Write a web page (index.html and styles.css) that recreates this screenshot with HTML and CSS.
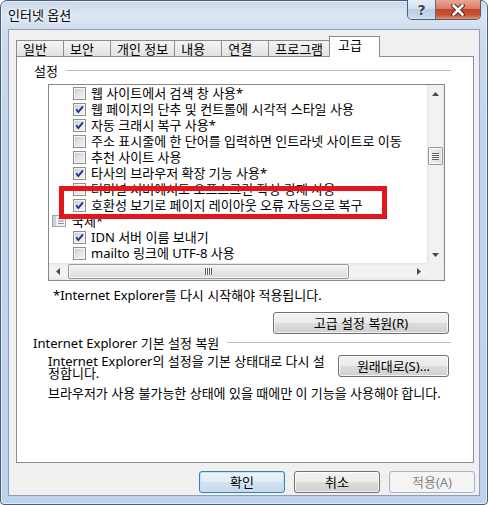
FILE: index.html
```html
<!DOCTYPE html>
<html lang="ko">
<head>
  <meta charset="UTF-8">
  <title>인터넷 옵션</title>
  <link rel="stylesheet" href="styles.css">
</head>
<body>
  <div class="window">
    <div class="titlebar">
      <span class="title">인터넷 옵션</span>
      <div class="caption">
        <span class="cap-btn help">?</span>
        <span class="cap-btn close">
          <svg width="14" height="12" viewBox="0 0 14 12">
            <path d="M2.5 1.5 L11.5 10.5 M11.5 1.5 L2.5 10.5" stroke="#4a2a22" stroke-width="4.6" stroke-linecap="round"/>
            <path d="M2.5 1.5 L11.5 10.5 M11.5 1.5 L2.5 10.5" stroke="#fff" stroke-width="2.6" stroke-linecap="round"/>
          </svg>
        </span>
      </div>
    </div>

    <div class="client">
      <div class="tabs">
        <span class="tab">일반</span>
        <span class="tab">보안</span>
        <span class="tab">개인 정보</span>
        <span class="tab">내용</span>
        <span class="tab">연결</span>
        <span class="tab">프로그램</span>
        <span class="tab active">고급</span>
      </div>

      <div class="panel">
        <div class="group-title"><span>설정</span></div>

        <div class="list">
          <div class="list-body">
            <div class="item"><span class="check"></span>웹 사이트에서 검색 창 사용*</div>
            <div class="item"><span class="check on"></span>웹 페이지의 단추 및 컨트롤에 시각적 스타일 사용</div>
            <div class="item"><span class="check on"></span>자동 크래시 복구 사용*</div>
            <div class="item"><span class="check"></span>주소 표시줄에 한 단어를 입력하면 인트라넷 사이트로 이동</div>
            <div class="item"><span class="check"></span>추천 사이트 사용</div>
            <div class="item"><span class="check on"></span>타사의 브라우저 확장 기능 사용*</div>
            <div class="item"><span class="check"></span>터미널 서버에서도 오프스크린 작성 강제 사용</div>
            <div class="item"><span class="check on"></span>호환성 보기로 페이지 레이아웃 오류 자동으로 복구</div>
            <div class="item node">
              <svg class="node-icon" width="14" height="12" viewBox="0 0 14 12">
                <rect x="0.5" y="0.5" width="13" height="11" fill="#eef1f4" stroke="#9aa6b2"/>
                <rect x="1" y="1" width="3" height="10" fill="#c9d1da"/>
                <path d="M6 3.5 H12 M6 6 H12 M6 8.5 H12" stroke="#8a96a3"/>
              </svg>
              국제*
            </div>
            <div class="item"><span class="check on"></span>IDN 서버 이름 보내기</div>
            <div class="item"><span class="check"></span>mailto 링크에 UTF-8 사용</div>
          </div>

          <div class="vscroll">
            <span class="arrow">
              <svg width="7" height="4" viewBox="0 0 7 4"><path d="M0 4 L3.5 0 L7 4Z" fill="#4a4a4a"/></svg>
            </span>
            <div class="track">
              <span class="vthumb"><span class="grip"></span></span>
            </div>
            <span class="arrow">
              <svg width="7" height="4" viewBox="0 0 7 4"><path d="M0 0 L3.5 4 L7 0Z" fill="#4a4a4a"/></svg>
            </span>
          </div>

          <div class="hscroll">
            <span class="arrow">
              <svg width="4" height="7" viewBox="0 0 4 7"><path d="M4 0 L0 3.5 L4 7Z" fill="#4a4a4a"/></svg>
            </span>
            <div class="track">
              <span class="hthumb"><span class="grip"></span></span>
            </div>
            <span class="arrow">
              <svg width="4" height="7" viewBox="0 0 4 7"><path d="M0 0 L4 3.5 L0 7Z" fill="#4a4a4a"/></svg>
            </span>
          </div>

          <div class="corner"></div>

          <div class="highlight"></div>
        </div>

        <p class="note">*Internet Explorer를 다시 시작해야 적용됩니다.</p>

        <div class="btn-row">
          <button class="btn restore">고급 설정 복원(R)</button>
        </div>

        <div class="group-title second"><span>Internet Explorer 기본 설정 복원</span></div>

        <div class="reset-row">
          <p>Internet Explorer의 설정을 기본 상태대로 다시 설정합니다.</p>
          <button class="btn reset">원래대로(S)...</button>
        </div>

        <p class="warn">브라우저가 사용 불가능한 상태에 있을 때에만 이 기능을 사용해야 합니다.</p>
      </div>

      <div class="footer">
        <button class="btn default">확인</button>
        <button class="btn">취소</button>
        <button class="btn" disabled>적용(A)</button>
      </div>
    </div>
  </div>
</body>
</html>
```

FILE: styles.css
```css
body {
  margin: 0;
  font-family: "Noto Sans", "Noto Sans CJK KR", sans-serif;
  font-size: 13px;
  color: #000;
  background: #fff;
}
.window {
  width: 488px;
  height: 505px;
  box-sizing: border-box;
  display: flex;
  flex-direction: column;
  padding: 0 7px 8px 7px;
  border: 1px solid #4d5f78;
  border-radius: 7px 7px 4px 4px;
  background: linear-gradient(180deg, #c9d8ea 0, #dbe6f3 14px, #cddcee 30px, #c2d6ed 120px, #bdd3ec 100%);
  box-shadow: inset 0 0 0 1px rgba(255, 255, 255, 0.55);
}
.titlebar {
  height: 28px;
  display: flex;
  justify-content: space-between;
  align-items: center;
}
.title {
  line-height: 16px;
  text-shadow: 0 0 6px #fff, 0 0 3px #fff;
}
.caption {
  display: flex;
  align-self: flex-start;
  margin: -1px -1px 0 0;
  border: 1px solid #4b5d77;
  border-top: none;
  border-radius: 0 0 5px 5px;
  overflow: hidden;
}
.cap-btn {
  height: 19px;
  display: flex;
  align-items: center;
  justify-content: center;
}
.help {
  width: 27px;
  border-right: 1px solid #5c6e86;
  background: linear-gradient(180deg, #e6eef7 0, #d3dfec 45%, #bccde2 50%, #c6d6ea 85%, #d8e4f2 100%);
  color: #33445c;
  font-family: "DejaVu Sans", sans-serif;
  font-size: 14px;
  font-weight: bold;
  text-shadow: 0 0 2px #fff, 0 0 1px #fff;
}
.close {
  width: 44px;
  background: linear-gradient(180deg, #e9a896 0, #dc7b64 45%, #c4442c 50%, #cc5535 80%, #e3906f 100%);
}
.client {
  flex: 1;
  display: flex;
  flex-direction: column;
  background: #f0f0f0;
  border: 1px solid #8b9fb8;
}
.tabs {
  display: flex;
  align-items: flex-end;
  height: 20px;
  margin: 6px 0 0 7px;
}
.tab {
  height: 16px;
  min-width: 48px;
  box-sizing: border-box;
  padding: 0 6px;
  margin-right: -1px;
  border: 1px solid #898c95;
  border-bottom: none;
  background: linear-gradient(180deg, #f4f4f4, #e2e2e2);
  line-height: 16px;
  white-space: nowrap;
}
.tab.active {
  position: relative;
  z-index: 1;
  height: 21px;
  min-width: 51px;
  margin-bottom: -1px;
  padding: 0 8px;
  background: #fff;
  line-height: 16px;
}
.panel {
  height: 407px;
  box-sizing: border-box;
  margin: 0 5px 0 7px;
  border: 1px solid #898c95;
  background: #fff;
  display: flex;
  flex-direction: column;
}
.group-title {
  display: flex;
  align-items: center;
  gap: 8px;
  height: 16px;
  margin: 5px 22px 0 17px;
  white-space: nowrap;
}
.group-title::after {
  content: "";
  flex: 1;
  height: 1px;
  background: #b9c0c6;
}
.group-title.second {
  margin: 0 22px 0 16px;
}
.list {
  position: relative;
  width: 397px;
  height: 197px;
  box-sizing: border-box;
  margin: 6px 0 0 31px;
  border: 1px solid #828790;
  display: grid;
  grid-template-columns: 1fr 17px;
  grid-template-rows: 1fr 17px;
}
.list-body {
  overflow: hidden;
}
.item {
  height: 16px;
  display: flex;
  align-items: center;
  gap: 5px;
  padding-left: 24px;
  line-height: 16px;
  white-space: nowrap;
}
.item.node {
  padding-left: 3px;
  gap: 6px;
}
.check {
  width: 13px;
  height: 13px;
  flex: none;
  box-sizing: border-box;
  border: 1px solid #8f8f8f;
  background: linear-gradient(135deg, #c3c8cf 0, #e4e6e9 55%, #f7f7f7 100%);
  box-shadow: inset 0 0 0 1px #f4f4f4;
}
.check.on {
  background: url("data:image/svg+xml;utf8,<svg xmlns='http://www.w3.org/2000/svg' width='11' height='11' viewBox='0 0 11 11'><path d='M2.2 5.4 L4.4 8 L9 2.4' fill='none' stroke='%23233f86' stroke-width='2'/></svg>") center / 11px 11px no-repeat, linear-gradient(135deg, #c3c8cf 0, #e4e6e9 55%, #f7f7f7 100%);
}
.node-icon {
  flex: none;
}
.vscroll, .hscroll {
  display: flex;
}
.vscroll {
  flex-direction: column;
  background: linear-gradient(90deg, #e3e3e3 0, #f2f2f2 3px, #f2f2f2 14px, #e6e6e6 17px);
}
.hscroll {
  background: linear-gradient(180deg, #e3e3e3 0, #f2f2f2 3px, #f2f2f2 14px, #e6e6e6 17px);
}
.arrow {
  width: 17px;
  height: 17px;
  flex: none;
  display: flex;
  align-items: center;
  justify-content: center;
}
.track {
  flex: 1;
  display: flex;
}
.vscroll .track {
  flex-direction: column;
}
.vthumb, .hthumb {
  box-sizing: border-box;
  border: 1px solid #979797;
  border-radius: 2px;
  display: flex;
  align-items: center;
  justify-content: center;
  box-shadow: inset 0 0 0 1px rgba(255, 255, 255, 0.8);
}
.vthumb {
  width: 15px;
  height: 18px;
  margin: 45px 0 0 1px;
  background: linear-gradient(90deg, #f2f2f2, #dcdcdc);
}
.hthumb {
  width: 281px;
  height: 15px;
  margin: 1px 0 0 2px;
  background: linear-gradient(180deg, #f2f2f2, #dcdcdc);
}
.vthumb .grip {
  width: 7px;
  height: 7px;
  background: repeating-linear-gradient(180deg, #5e5e5e 0 1px, #f8f8f8 1px 2px);
}
.hthumb .grip {
  width: 7px;
  height: 7px;
  background: repeating-linear-gradient(90deg, #5e5e5e 0 1px, #f8f8f8 1px 2px);
}
.corner {
  background: #f0f0f0;
}
.highlight {
  position: absolute;
  left: 10px;
  top: 101px;
  width: 328px;
  height: 33px;
  box-sizing: border-box;
  border: 5px solid #e3151d;
  pointer-events: none;
}
.note {
  margin: 6px 0 0 36px;
  line-height: 16px;
}
.btn-row {
  display: flex;
  justify-content: flex-end;
  margin-top: 9px;
  padding-right: 24px;
}
.btn {
  height: 22px;
  box-sizing: border-box;
  padding: 0;
  font: inherit;
  color: #000;
  border: 1px solid #707070;
  border-radius: 3px;
  background: linear-gradient(180deg, #f2f2f2 0, #ebebeb 48%, #dddddd 52%, #cfcfcf 100%);
  box-shadow: inset 0 0 0 1px rgba(255, 255, 255, 0.75);
  line-height: 20px;
}
.btn.restore {
  width: 176px;
}
.btn.reset {
  width: 111px;
  flex: none;
}
.btn.default {
  border-color: #3c7fb1;
  background: linear-gradient(180deg, #eef5fb 0, #e2ecf6 48%, #d2e2f1 52%, #c5d8ea 100%);
  box-shadow: inset 0 0 0 1px #bfe2f7;
}
.btn:disabled {
  color: #838383;
  border-color: #adb2b5;
  background: #f4f4f4;
  box-shadow: none;
}
.reset-row {
  display: flex;
  justify-content: space-between;
  align-items: flex-start;
  margin: 5px 24px 0 31px;
}
.reset-row p {
  width: 282px;
  margin: 0;
  line-height: 12px;
}
.warn {
  margin: 6px 0 0 31px;
  line-height: 16px;
}
.footer {
  display: flex;
  justify-content: flex-end;
  gap: 9px;
  padding: 8px 4px 0 0;
}
.footer .btn {
  width: 86px;
}
```
